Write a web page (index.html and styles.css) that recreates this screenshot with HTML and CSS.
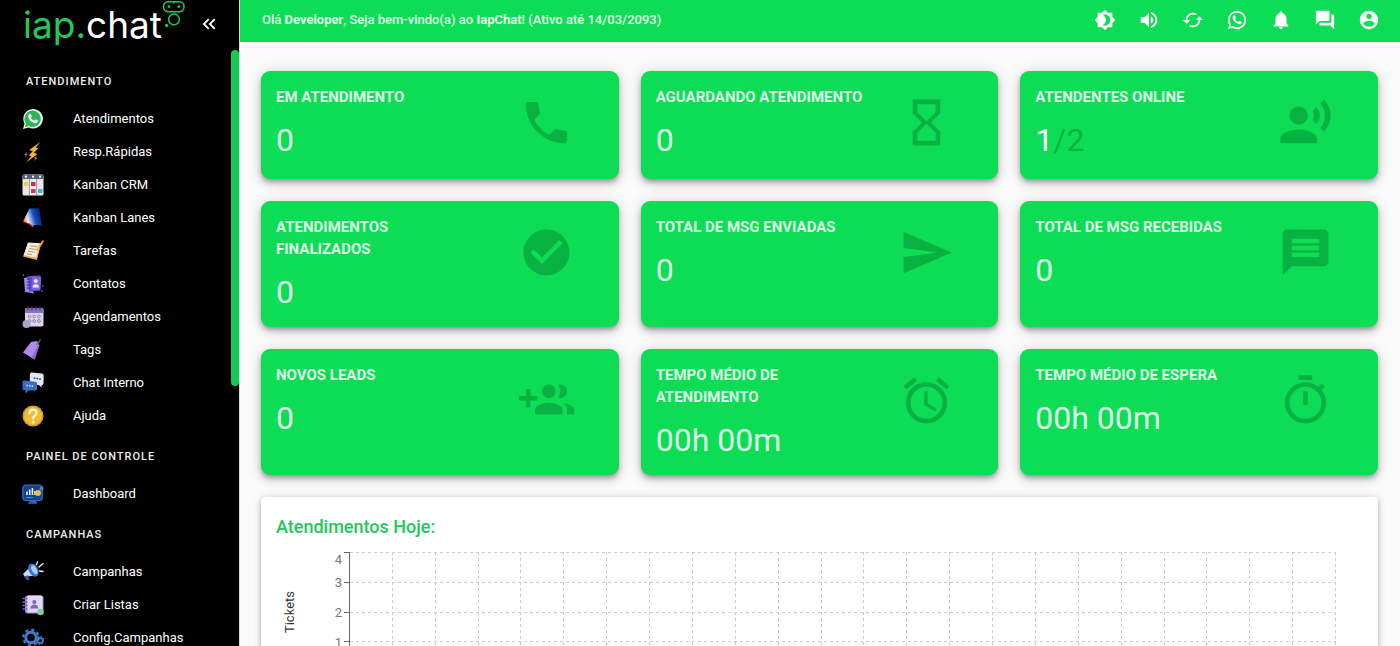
FILE: index.html
```html
<!DOCTYPE html>
<html lang="pt-BR">
<head>
<meta charset="utf-8">
<meta name="viewport" content="width=device-width, initial-scale=1">
<title>IapChat</title>
<link rel="stylesheet" href="styles.css">
</head>
<body>
<div class="app">
  <aside class="sidebar">
    <div class="brand">
      <a class="logo" href="#"><span class="logo-iap">iap.</span><span class="logo-chat">chat</span><svg class="logo-bot" viewBox="0 0 24 28" fill="none" stroke="#22c85a" stroke-width="1.5"><rect x="1.5" y="1.7" width="20.5" height="10" rx="4.6"/><path d="M11.8 2v1.6"/><circle cx="12" cy="19.5" r="5.4"/><g fill="#22c85a" stroke="none"><circle cx="7" cy="6.6" r="1.4"/><circle cx="16.8" cy="6.6" r="1.4"/><circle cx="4.6" cy="25.4" r="1.7"/></g></svg></a>
      <button class="collapse" type="button" aria-label="Recolher menu"><svg viewBox="0 0 24 24"><path d="M17.59 18L19 16.59 14.42 12 19 7.41 17.59 6l-6 6zM11 18l1.41-1.41L7.83 12l4.58-4.59L11 6l-6 6z"/></svg></button>
    </div>
    <nav class="menu">
      <h2 class="menu-title">ATENDIMENTO</h2>
      <a class="menu-item" href="#"><svg viewBox="0 0 22 22"><path fill="#eefbf0" d="M1 21l1.6-5.3A9.8 9.8 0 1 1 6.4 19.400z"/><path fill="#2fb551" d="M2.800 19.200l1.100-3.700A8.200 8.200 0 1 1 6.700 18z"/><path fill="#fff" d="M7.700 5.800c.5-.3 1-.1 1.200.4l.7 1.700c.1.500-.6 1.100-.8 1.400.8 1.700 2 2.800 3.800 3.500.3-.2 1-1.200 1.300-1.200.4 0 1.600.7 2.100 1 .3.900-.7 2.200-1.700 2.500-3.600.8-8-3.600-8-6.900 0-1 .7-2 1.400-2.400z"/></svg>Atendimentos</a>
      <a class="menu-item" href="#"><svg viewBox="0 0 22 22"><path fill="#f3b52f" d="M18.500.8L7.200 9l3.600 1.200-4 4.200 2.400.8-5 6.300L15.500 13l-3.700-1.200 4.600-4.500-2.600-.8z"/><path fill="#b9832b" d="M5 11l-2.800 2.600 1.600.4-1.300 2.500 3.200-3.200-1.400-.5zM14.800 14.500l-3 2.800 1.400.5-1.800 2.400 4-3.300-1.400-.5z"/></svg>Resp.Rápidas</a>
      <a class="menu-item" href="#"><svg viewBox="0 0 22 22"><rect x=".5" y=".5" width="21" height="21" rx="1.500" fill="#e9e7e8"/><path fill="#526273" d="M2 .5h18A1.500 1.500 0 0 1 21.500 2v3H.5V2A1.500 1.500 0 0 1 2 .5z"/><path stroke="#7d8a95" stroke-width=".8" d="M7.400 5v16.500M14.600 5v16.500"/><g fill="#fff"><circle cx="4" cy="2.700" r="1.100"/><circle cx="11" cy="2.700" r="1.100"/><circle cx="18" cy="2.700" r="1.100"/></g><rect x="2" y="8" width="4" height="4" fill="#f0cf45"/><rect x="9" y="8" width="4.500" height="4" fill="#c92d59"/><rect x="9" y="15" width="4.500" height="4" fill="#dc3762"/><rect x="16" y="15" width="4.500" height="4" fill="#38bcc8"/></svg>Kanban CRM</a>
      <a class="menu-item" href="#"><svg viewBox="0 0 22 22"><defs><linearGradient id="lane" x1="0" y1=".7" x2="1" y2=".4"><stop offset="0" stop-color="#f25b2a"/><stop offset=".25" stop-color="#f7e3d8"/><stop offset=".4" stop-color="#7db4f0"/><stop offset=".6" stop-color="#1a4fc0"/><stop offset="1" stop-color="#0a1c66"/></linearGradient></defs><path fill="url(#lane)" d="M7.500 1.500L17.500 1.200l2.300 17.300-7.800-.5-.8 1.500-2.700-1.700L1 14.500z"/><path fill="#d92c20" d="M1 14.500l7 2 4 3.300-1.800.4-2.600-2.400z"/></svg>Kanban Lanes</a>
      <a class="menu-item" href="#"><svg viewBox="0 0 22 22"><path fill="#e8a860" d="M6 3l13 1-4 16L1 16.500z"/><path fill="#f6ead9" d="M6 2.500l12.500.8-4.700 14.500-12-2.600z"/><path stroke="#b39c8c" stroke-width="1" d="M8 5.800l7 .8M7 8.500l7 1M6 11.200l6.500 1M5 13.800l5 .9"/><path stroke="#f2b33d" stroke-width="2" stroke-linecap="round" d="M20.300 2l-5.200 8"/><path stroke="#e66b78" stroke-width="2" stroke-linecap="round" d="M20.800 1.200l-.6 1"/></svg>Tarefas</a>
      <a class="menu-item" href="#"><svg viewBox="0 0 22 22"><path fill="#9a86e8" d="M2 5l8-1.500 1 15.500 2 1.500-10-1.500z"/><path fill="#6247c9" d="M6 3l12.500-.5L18 17.500l-11 1z"/><path fill="#7c62e2" d="M10 3l9.200 1-.7 13.500-9-1z"/><path stroke="#33228c" stroke-width="1.200" d="M5 6h3M5 9h3M5 12h3M5 15h3"/><circle cx="13.800" cy="8" r="2" fill="#f2e9ff"/><path fill="#f2e9ff" d="M10.500 14.500c0-4.500 6.500-4.500 6.500 0z"/><g fill="#9a86e8"><circle cx="1.500" cy="2" r=".8"/><circle cx="20.700" cy="13" r=".7"/><circle cx="20" cy="18" r=".8"/></g></svg>Contatos</a>
      <a class="menu-item" href="#"><svg viewBox="0 0 22 22"><rect x="3" y="2" width="18.500" height="18.500" rx="2" fill="#ded6ee"/><path fill="#8d6fc8" d="M5 2h14.500a2 2 0 0 1 2 2v3H3V4a2 2 0 0 1 2-2z"/><path stroke="#49357a" stroke-width="1.300" d="M6 .5v4M10 .5v4M14 .5v4M18 .5v4"/><g fill="none" stroke="#9288a5" stroke-width="1"><circle cx="7.500" cy="10.500" r="1.400"/><circle cx="12.200" cy="10.500" r="1.400"/><circle cx="17" cy="10.500" r="1.400"/><circle cx="7.500" cy="15" r="1.400"/><circle cx="12.200" cy="15" r="1.400"/><circle cx="17" cy="15" r="1.400"/></g><circle cx="4.500" cy="18" r="4" fill="#a9a0cc"/></svg>Agendamentos</a>
      <a class="menu-item" href="#"><svg viewBox="0 0 22 22"><path fill="#ae8cec" d="M9 3l6-1 2.300 4.500L12.500 20.500 1 13.500z"/><path fill="#8c69d3" d="M16.500 5l.8 1.500-4.800 14-3-1.800z"/><path fill="none" stroke="#77717f" stroke-width="1.200" d="M14 5.500c2-.5 3-2 4.500-5"/></svg>Tags</a>
      <a class="menu-item" href="#"><svg viewBox="0 0 22 22"><path fill="#e3e9f5" d="M9.500.5l10.500 1a2 2 0 0 1 1.700 2l-.2 8a2 2 0 0 1-2 1.700l.2 2.300-3-2.400-7-.7a2 2 0 0 1-1.800-2V2.500A2 2 0 0 1 9.500.5z"/><path fill="#376cc7" d="M2 8.500l11.500 1.200a1.500 1.500 0 0 1 1.500 1.500v5.500a2 2 0 0 1-2 1.800H6.500L3.500 21.500v-3.200L2 18a1.500 1.500 0 0 1-1.500-1.500V10A1.500 1.500 0 0 1 2 8.500z"/><g fill="#3157a4"><circle cx="12.500" cy="6.300" r="1"/><circle cx="15.300" cy="6.600" r="1"/><circle cx="18" cy="6.900" r="1"/></g><g fill="#b7d0fa"><circle cx="5.200" cy="13.500" r=".9"/><circle cx="7.800" cy="13.700" r=".9"/><circle cx="10.400" cy="14" r=".9"/></g></svg>Chat Interno</a>
      <a class="menu-item" href="#"><svg viewBox="0 0 22 22"><circle cx="11" cy="11" r="10.500" fill="#d99e25"/><circle cx="11" cy="11" r="9" fill="#efb93a"/><path fill="none" stroke="#fff3d2" stroke-width="2.400" stroke-linecap="round" d="M7.500 8.200c.2-4.600 7.200-4.300 7.200-.4 0 2.500-3.400 2.800-3.500 5.500"/><circle cx="11.200" cy="17" r="1.500" fill="#fff3d2"/></svg>Ajuda</a>
      <h2 class="menu-title">PAINEL DE CONTROLE</h2>
      <a class="menu-item" href="#"><svg viewBox="0 0 22 22"><rect x=".8" y="2" width="19.500" height="15.500" rx="3" fill="#17408a" stroke="#3571c2" stroke-width="1.200"/><path fill="#2b64b4" d="M8 17.500h6l1 2.500H7z"/><path stroke="#2b64b4" stroke-width="1.200" d="M6 20.200h9"/><path stroke="#fff" stroke-width="1.500" d="M5 12V8.500M7.700 12V6.500M10.400 12V5M13 12V8"/><path stroke="#4c94dd" d="M4 14.500h7"/><circle cx="16" cy="10" r="3" fill="#f3bd3e"/><circle cx="19.500" cy="5.500" r="2" fill="#4d86c9"/></svg>Dashboard</a>
      <h2 class="menu-title">CAMPANHAS</h2>
      <a class="menu-item" href="#"><svg viewBox="0 0 22 22"><path fill="#c9dcf6" d="M1 13l7-7 4 8.500-9 1.500z"/><path fill="#3e56a8" d="M2 15.500l4-1.200 1.500 4.200-2.300.9z"/><ellipse cx="11.500" cy="9" rx="4.600" ry="7" transform="rotate(-28 11.500 9)" fill="#3675d9"/><ellipse cx="12.300" cy="8.800" rx="2.500" ry="4.800" transform="rotate(-28 12.300 8.800)" fill="#a8cdfa"/><path stroke="#e6eaf1" stroke-width="1.400" stroke-linecap="round" d="M14.500 3.500L15.500 1M17 6l4-3.500M17.500 10l3.500.5"/></svg>Campanhas</a>
      <a class="menu-item" href="#"><svg viewBox="0 0 22 22"><rect x="3" y="1.500" width="18.500" height="18" rx="2.500" fill="#a48ce2"/><rect x="5" y="1.500" width="15.500" height="17" rx="2" fill="#e2d8fb"/><path stroke="#8060d0" stroke-width="1.500" stroke-linecap="round" d="M1 4.500h4M1 8h4M1 11.500h4M1 15h4"/><circle cx="12.300" cy="8" r="2.100" fill="#7b67b5"/><path fill="#7b67b5" d="M8.300 14.500c0-5.500 8-5.500 8 0z"/><circle cx="18.500" cy="18" r="3.300" fill="#7ed086"/></svg>Criar Listas</a>
      <a class="menu-item" href="#"><svg viewBox="0 0 22 22"><g fill="none" stroke="#3f7cc9"><circle cx="9" cy="10.500" r="5.300" stroke-width="3"/><circle cx="9" cy="10.500" r="7.800" stroke-width="2.200" stroke-dasharray="3.060 3.060"/><circle cx="18" cy="13.500" r="2.700" stroke-width="1.700"/><circle cx="18" cy="13.500" r="4" stroke-width="1.200" stroke-dasharray="1.570 1.570"/></g></svg>Config.Campanhas</a>
    </nav>
    <div class="scroll-thumb"></div>
  </aside>

  <div class="content">
    <header class="topbar">
      <p class="greeting">Olá <b>Developer</b>, Seja bem-vindo(a) ao <b>IapChat</b>! (Ativo até 14/03/2093)</p>
      <div class="actions">
        <button type="button" aria-label="Tema"><svg viewBox="0 0 24 24"><path d="M20 8.690V4h-4.690L12 .690 8.690 4H4v4.690L.690 12 4 15.310V20h4.690L12 23.310 15.310 20H20v-4.690L23.310 12 20 8.690zM12 18c-.89 0-1.740-.2-2.500-.55C11.560 16.500 13 14.420 13 12s-1.440-4.500-3.500-5.450C10.260 6.200 11.110 6 12 6c3.310 0 6 2.690 6 6s-2.690 6-6 6z"/></svg></button>
        <button type="button" aria-label="Volume"><svg viewBox="0 0 24 24"><path d="M3 9v6h4l5 5V4L7 9H3zm13.500 3c0-1.770-1.020-3.290-2.500-4.030v8.050c1.480-.73 2.500-2.250 2.500-4.020zM14 3.230v2.060c2.890.86 5 3.540 5 6.710s-2.110 5.850-5 6.710v2.060c4.010-.91 7-4.490 7-8.770s-2.990-7.860-7-8.770z"/></svg></button>
        <button type="button" aria-label="Atualizar"><svg viewBox="0 0 24 24"><path d="M19 8l-4 4h3c0 3.310-2.690 6-6 6-1.010 0-1.970-.25-2.800-.7l-1.460 1.460C8.970 19.540 10.430 20 12 20c4.420 0 8-3.580 8-8h3l-4-4zM6 12c0-3.310 2.690-6 6-6 1.010 0 1.970.25 2.800.7l1.460-1.460C15.030 4.460 13.570 4 12 4c-4.420 0-8 3.580-8 8H1l4 4 4-4H6z"/></svg></button>
        <button type="button" aria-label="WhatsApp"><svg viewBox="0 0 24 24"><path d="M16.750 13.960c.25.13.41.2.46.3.06.11.04.61-.21 1.180-.2.56-1.240 1.100-1.700 1.120-.46.020-.47.360-2.960-.73-2.490-1.090-3.990-3.750-4.110-3.920-.12-.17-.96-1.380-.92-2.610.05-1.220.69-1.800.95-2.040.24-.26.51-.29.68-.26h.47c.15 0 .36-.06.55.45l.69 1.870c.06.13.1.28.01.44l-.27.41-.39.42c-.12.12-.26.25-.12.5.12.26.62 1.090 1.320 1.780.91.88 1.710 1.170 1.950 1.300.24.14.39.12.54-.04l.81-.94c.19-.25.35-.19.58-.11l1.670.88M12 2a10 10 0 0 1 10 10 10 10 0 0 1-10 10c-1.970 0-3.800-.57-5.350-1.550L2 22l1.550-4.650A9.969 9.969 0 0 1 2 12 10 10 0 0 1 12 2m0 2a8 8 0 0 0-8 8c0 1.720.54 3.310 1.460 4.610L4.500 19.500l2.890-.96A7.950 7.950 0 0 0 12 20a8 8 0 0 0 8-8 8 8 0 0 0-8-8z"/></svg></button>
        <button type="button" aria-label="Notificações"><svg viewBox="0 0 24 24"><path d="M12 22c1.100 0 2-.9 2-2h-4c0 1.100.89 2 2 2zm6-6v-5c0-3.070-1.640-5.640-4.500-6.320V4c0-.83-.67-1.500-1.500-1.500s-1.500.67-1.500 1.500v.68C7.630 5.360 6 7.920 6 11v5l-2 2v1h16v-1l-2-2z"/></svg></button>
        <button type="button" aria-label="Chat interno"><svg viewBox="0 0 24 24"><path d="M21 6h-2v9H6v2c0 .55.45 1 1 1h11l4 4V7c0-.55-.45-1-1-1zm-4 6V3c0-.55-.45-1-1-1H3c-.55 0-1 .45-1 1v14l4-4h10c.55 0 1-.45 1-1z"/></svg></button>
        <button type="button" aria-label="Conta"><svg viewBox="0 0 24 24"><path d="M12 2C6.480 2 2 6.480 2 12s4.480 10 10 10 10-4.480 10-10S17.520 2 12 2zm0 3c1.660 0 3 1.340 3 3s-1.340 3-3 3-3-1.340-3-3 1.340-3 3-3zm0 14.200c-2.500 0-4.710-1.280-6-3.220.03-1.990 4-3.080 6-3.080 1.990 0 5.970 1.090 6 3.080-1.290 1.940-3.500 3.220-6 3.220z"/></svg></button>
      </div>
    </header>

    <main class="main">
      <section class="cards">
        <article class="card"><div><h3>EM ATENDIMENTO</h3><p class="value">0</p></div><svg viewBox="0 0 24 24"><path d="M6.620 10.790c1.440 2.830 3.760 5.140 6.590 6.590l2.200-2.200c.27-.27.67-.36 1.020-.24 1.120.37 2.330.57 3.570.57.55 0 1 .45 1 1V20c0 .55-.45 1-1 1-9.390 0-17-7.610-17-17 0-.55.45-1 1-1h3.500c.55 0 1 .45 1 1 0 1.250.2 2.450.57 3.570.11.35.03.74-.25 1.020l-2.200 2.200z"/></svg></article>
        <article class="card"><div><h3>AGUARDANDO ATENDIMENTO</h3><p class="value">0</p></div><svg viewBox="0 0 24 24"><path d="M6 2v6h.01L6 8.010 10 12l-4 4 .01.01H6V22h12v-5.990h-.01L18 16l-4-4 4-3.990-.01-.01H18V2H6zm10 14.500V20H8v-3.500l4-4 4 4zm-4-5l-4-4V4h8v3.500l-4 4z"/></svg></article>
        <article class="card"><div><h3>ATENDENTES ONLINE</h3><p class="value"><span class="online">1</span><span class="total">/2</span></p></div><svg viewBox="0 0 24 24"><circle cx="9" cy="9" r="4"/><path d="M9 15c-2.670 0-8 1.340-8 4v2h16v-2c0-2.660-5.330-4-8-4zm7.760-9.640l-1.680 1.690c.84 1.180.84 2.710 0 3.890l1.680 1.690c2.020-2.020 2.020-5.070 0-7.270zM20.070 2l-1.630 1.630c2.770 3.020 2.770 7.560 0 10.740L20.070 16c3.900-3.890 3.910-9.950 0-14z"/></svg></article>
        <article class="card"><div><h3>ATENDIMENTOS<br>FINALIZADOS</h3><p class="value">0</p></div><svg viewBox="0 0 24 24"><path d="M12 2C6.480 2 2 6.480 2 12s4.480 10 10 10 10-4.480 10-10S17.520 2 12 2zm-2 15l-5-5 1.410-1.410L10 14.170l7.590-7.590L19 8l-9 9z"/></svg></article>
        <article class="card"><div><h3>TOTAL DE MSG ENVIADAS</h3><p class="value">0</p></div><svg viewBox="0 0 24 24"><path d="M2.010 21L23 12 2.010 3 2 10l15 2-15 2z"/></svg></article>
        <article class="card"><div><h3>TOTAL DE MSG RECEBIDAS</h3><p class="value">0</p></div><svg viewBox="0 0 24 24"><path d="M20 2H4c-1.100 0-1.990.9-1.990 2L2 22l4-4h14c1.100 0 2-.9 2-2V4c0-1.100-.9-2-2-2zm-2 12H6v-2h12v2zm0-3H6V9h12v2zm0-3H6V6h12v2z"/></svg></article>
        <article class="card"><div><h3>NOVOS LEADS</h3><p class="value">0</p></div><svg viewBox="0 0 24 24"><path d="M8 10H5V7H3v3H0v2h3v3h2v-3h3v-2zm10 1c1.660 0 2.990-1.340 2.990-3S19.660 5 18 5c-.32 0-.63.05-.91.14.57.81.9 1.790.9 2.860s-.34 2.040-.9 2.860c.28.09.59.14.91.14zm-5 0c1.660 0 2.990-1.340 2.990-3S14.660 5 13 5c-1.660 0-3 1.340-3 3s1.340 3 3 3zm6.620 2.160c.83.73 1.380 1.660 1.380 2.840v2h3v-2c0-1.540-2.370-2.490-4.380-2.840zM13 13c-2 0-6 1-6 3v2h12v-2c0-2-4-3-6-3z"/></svg></article>
        <article class="card"><div><h3>TEMPO MÉDIO DE ATENDIMENTO</h3><p class="value">00h 00m</p></div><svg viewBox="0 0 24 24"><path d="M22 5.720l-4.600-3.860-1.290 1.530 4.600 3.860L22 5.720zM7.880 3.390L6.600 1.860 2 5.710l1.290 1.530 4.590-3.850zM12.500 8H11v6l4.750 2.850.75-1.230-4-2.370V8zM12 4c-4.970 0-9 4.030-9 9s4.020 9 9 9c4.970 0 9-4.030 9-9s-4.030-9-9-9zm0 16c-3.870 0-7-3.130-7-7s3.130-7 7-7 7 3.130 7 7-3.130 7-7 7z"/></svg></article>
        <article class="card"><div><h3>TEMPO MÉDIO DE ESPERA</h3><p class="value">00h 00m</p></div><svg viewBox="0 0 24 24"><path d="M15 1H9v2h6V1zm-4 13h2V8h-2v6zm8.030-6.610l1.420-1.420c-.43-.51-.9-.99-1.410-1.410l-1.420 1.420C16.070 4.740 14.120 4 12 4c-4.970 0-9 4.030-9 9s4.020 9 9 9 9-4.030 9-9c0-2.120-.74-4.070-1.970-5.610zM12 20c-3.870 0-7-3.130-7-7s3.130-7 7-7 7 3.130 7 7-3.130 7-7 7z"/></svg></article>
      </section>

      <section class="panel">
        <h2>Atendimentos Hoje:</h2>
        <div class="chart">
          <span class="axis-title">Tickets</span>
          <ol class="axis-labels"><li>4</li><li>3</li><li>2</li><li>1</li></ol>
          <svg class="plot" id="plot"></svg>
        </div>
      </section>
    </main>
  </div>
</div>
<script src="chart.js"></script>
</body>
</html>
```
FILE: styles.css
```css
* { box-sizing: border-box; }

body {
  margin: 0;
  background: #fafafa;
  font-family: Roboto, "Liberation Sans", sans-serif;
}

h2, h3, p, ol { margin: 0; padding: 0; }

button {
  display: flex;
  align-items: center;
  justify-content: center;
  padding: 0;
  border: 0;
  background: none;
  color: #fff;
  cursor: pointer;
}

svg { flex: none; fill: currentColor; }

.app {
  display: flex;
  height: 100vh;
  overflow: hidden;
}

/* Sidebar */
.sidebar {
  position: relative;
  flex: none;
  width: 240px;
  overflow: hidden;
  background: #000;
  border-right: 1px solid #d5dbd7;
  color: #fff;
}

.brand {
  display: flex;
  justify-content: space-between;
  height: 48px;
  padding: 0 19px 0 23px;
}

.logo {
  display: flex;
  font-family: Inter, "Liberation Sans", sans-serif;
  font-size: 37px;
  font-weight: 400;
  line-height: 50px;
  text-decoration: none;
}

.logo-iap { color: #22c85a; }
.logo-chat { color: #fff; }
.logo-bot { width: 24px; height: 28px; fill: none; }

.collapse { width: 22px; }
.collapse svg { width: 22px; height: 22px; }

.menu { display: flex; flex-direction: column; padding-top: 9px; }

.menu-title {
  flex: none;
  height: 45px;
  padding: 3px 0 0 26px;
  font-size: 11px;
  font-weight: 500;
  letter-spacing: 1px;
  line-height: 43px;
  color: #eee;
}

.menu-item {
  display: flex;
  flex: none;
  align-items: center;
  gap: 29px;
  height: 33px;
  padding-left: 22px;
  color: #fff;
  font-size: 13px;
  text-decoration: none;
}

.menu-item svg { width: 22px; height: 22px; }

.scroll-thumb {
  position: absolute;
  top: 50px;
  right: 0;
  width: 8px;
  height: 336px;
  border-radius: 4px;
  background: #12cc54;
}

/* Top bar */
.content {
  flex: 1;
  min-width: 0;
  overflow: auto;
  scrollbar-width: none;
}

.topbar {
  display: flex;
  align-items: center;
  justify-content: space-between;
  height: 42px;
  padding: 0 9px 2px 22px;
  background: #0ddd54;
  color: #e4fcec;
}

.greeting { font-size: 13px; font-weight: 500; line-height: 20px; }

.actions { display: flex; }
.actions button { width: 44px; height: 40px; }
.actions svg { width: 22px; height: 22px; }

/* Metric cards */
.main { padding: 29px 22px 22px 21px; }

.cards {
  display: grid;
  grid-template-columns: repeat(3, minmax(0, 1fr));
  gap: 22px;
}

.card {
  display: grid;
  grid-template-columns: 2fr 1fr;
  align-items: start;
  min-height: 108px;
  padding: 15px 18px 15px 15px;
  border-radius: 9px;
  background: #0ddd54;
  box-shadow: 0 3px 5px -1px rgba(0, 0, 0, .3), 0 5px 9px rgba(0, 0, 0, .14), 0 1px 16px rgba(0, 0, 0, .12);
  color: #dcfce8;
}

.card h3 {
  font-size: 15px;
  font-weight: 700;
  line-height: 22px;
}

.value {
  margin-top: 13px;
  font-size: 32px;
  line-height: 39px;
}

.online { color: #fff; }
.total { color: #07b242; }

.card svg {
  justify-self: center;
  width: 55px;
  height: 55px;
  margin-top: 9px;
  color: #07b242;
}

/* Chart panel */
.panel {
  margin-top: 22px;
  padding: 15px 15px 48px;
  border-radius: 4px;
  background: #fff;
  box-shadow: 0 2px 4px rgba(0, 0, 0, .2), 0 1px 10px rgba(0, 0, 0, .16);
}

.panel h2 {
  font-size: 18px;
  font-weight: 500;
  line-height: 30px;
  color: #22c85a;
}

.chart {
  display: grid;
  grid-template-columns: 28px 39px 1fr;
  height: 120px;
  margin-top: 10px;
  padding-right: 27px;
}

.axis-title {
  align-self: center;
  justify-self: center;
  writing-mode: vertical-rl;
  transform: rotate(180deg);
  font-size: 13px;
  line-height: 28px;
  color: #333;
}

.axis-labels {
  display: grid;
  grid-template-rows: 15px repeat(3, 30px);
  align-items: center;
  padding-right: 1px;
  list-style: none;
  text-align: right;
  font-size: 13px;
  color: #777;
}

.plot {
  width: 100%;
  height: 120px;
  overflow: visible;
}

.grid-line { stroke: #ccc; stroke-dasharray: 3 3; }
.axis-line { stroke: #666; }
```
FILE: chart.js
```js
const plot = document.getElementById("plot");
const hours = 23;
const steps = 4;
const axisGap = 7;
const height = 120;

function line(className, x1, y1, x2, y2) {
  const el = document.createElementNS("http://www.w3.org/2000/svg", "line");
  el.setAttribute("class", className);
  el.setAttribute("x1", x1);
  el.setAttribute("y1", y1);
  el.setAttribute("x2", x2);
  el.setAttribute("y2", y2);
  plot.appendChild(el);
}

function draw() {
  plot.replaceChildren();
  const width = plot.getBoundingClientRect().width - axisGap;
  for (let i = 0; i <= steps; i++) {
    const y = Math.round(i * (height - 1) / steps) + 0.5;
    line("grid-line", axisGap, y, axisGap + width, y);
    line("axis-line", axisGap - 6, y, axisGap, y);
  }
  for (let i = 1; i <= hours; i++) {
    const x = Math.round(axisGap + i * width / hours) - 0.5;
    line("grid-line", x, 0, x, height);
  }
  line("axis-line", axisGap - 0.5, 0, axisGap - 0.5, height);
}

draw();
window.addEventListener("resize", draw);
```
